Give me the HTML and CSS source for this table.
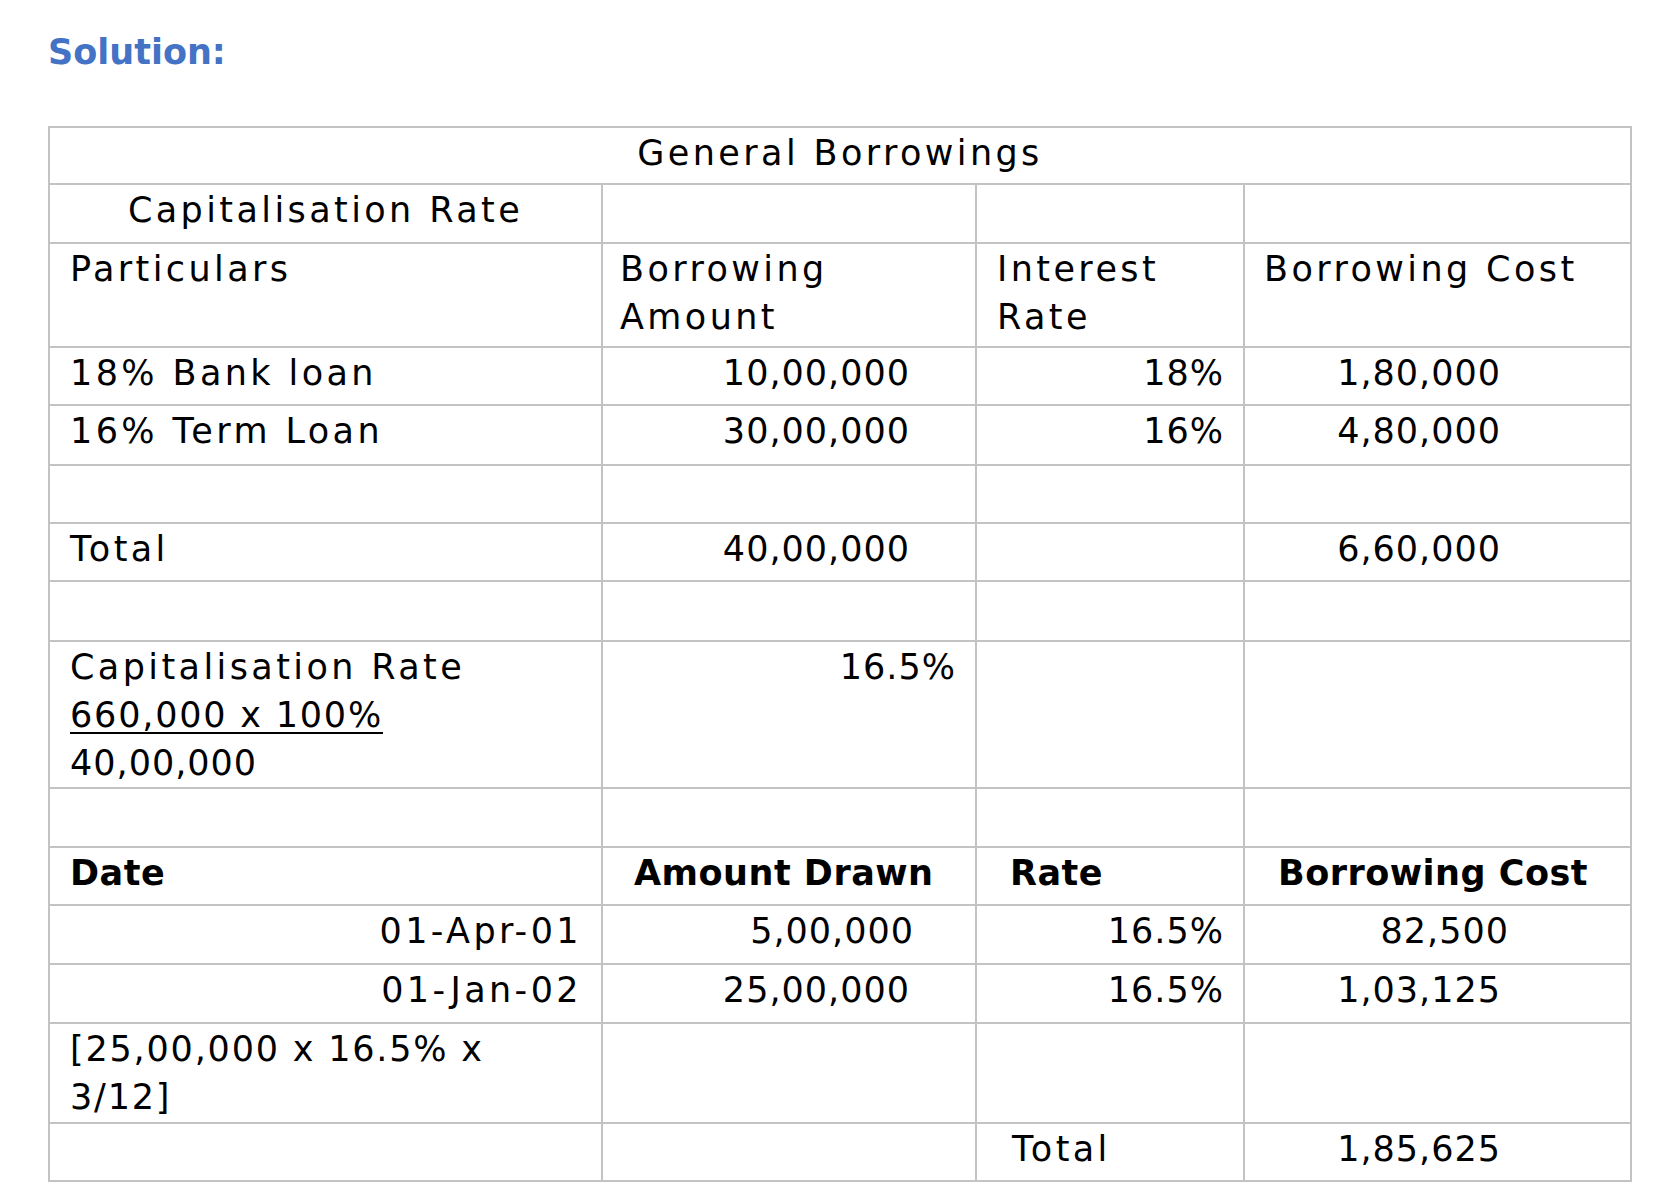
FILE: index.html
```html
<!DOCTYPE html>
<html lang="en">
<head>
<meta charset="utf-8">
<title>Solution - General Borrowings</title>
<link rel="stylesheet" href="styles.css">
</head>
<body>
<main class="page">
  <h2 class="solution">Solution:</h2>
  <table class="sheet">
    <colgroup>
      <col class="c1"><col class="c2"><col class="c3"><col class="c4">
    </colgroup>
    <tbody>
      <tr class="h57"><td colspan="4" class="t center">General Borrowings</td></tr>
      <tr class="h59"><td class="t center">Capitalisation Rate</td><td></td><td></td><td></td></tr>
      <tr class="r-2l">
        <td class="t pl-a">Particulars</td>
        <td class="t pl-b">Borrowing<br>Amount</td>
        <td class="t pl-c">Interest<br>Rate</td>
        <td class="t pl-d">Borrowing Cost</td>
      </tr>
      <tr>
        <td class="t pl-a">18% Bank loan</td>
        <td class="n right pr-amt">10,00,000</td>
        <td class="n right pr-rate">18%</td>
        <td class="n right pr-cost">1,80,000</td>
      </tr>
      <tr class="h60">
        <td class="t pl-a">16% Term Loan</td>
        <td class="n right pr-amt">30,00,000</td>
        <td class="n right pr-rate">16%</td>
        <td class="n right pr-cost">4,80,000</td>
      </tr>
      <tr><td></td><td></td><td></td><td></td></tr>
      <tr>
        <td class="t pl-a">Total</td>
        <td class="n right pr-amt">40,00,000</td>
        <td></td>
        <td class="n right pr-cost">6,60,000</td>
      </tr>
      <tr class="h60"><td></td><td></td><td></td><td></td></tr>
      <tr class="r-3l">
        <td class="t pl-a">Capitalisation Rate<br><span class="m uline">660,000 x 100%</span><br><span class="n">40,00,000</span></td>
        <td class="n right pr-rate">16.5%</td>
        <td></td>
        <td></td>
      </tr>
      <tr class="h59"><td></td><td></td><td></td><td></td></tr>
      <tr>
        <td class="b pl-date">Date</td>
        <td class="b pl-drawn">Amount Drawn</td>
        <td class="b pl-rate">Rate</td>
        <td class="b pl-bcost">Borrowing Cost</td>
      </tr>
      <tr class="h59">
        <td class="t right pr-date">01-Apr-01</td>
        <td class="n right pr-amt2">5,00,000</td>
        <td class="n right pr-rate">16.5%</td>
        <td class="n right pr-cost2">82,500</td>
      </tr>
      <tr class="h59">
        <td class="t right pr-date">01-Jan-02</td>
        <td class="n right pr-amt">25,00,000</td>
        <td class="n right pr-rate">16.5%</td>
        <td class="n right pr-cost">1,03,125</td>
      </tr>
      <tr class="r-br">
        <td class="m pl-a">[25,00,000 x 16.5% x<br>3/12]</td>
        <td></td><td></td><td></td>
      </tr>
      <tr>
        <td></td>
        <td></td>
        <td class="t pl-total">Total</td>
        <td class="n right pr-cost">1,85,625</td>
      </tr>
    </tbody>
  </table>
</main>
</body>
</html>
```
FILE: styles.css
```css
html, body {
  margin: 0;
  padding: 0;
  background: #ffffff;
}

.page {
  padding: 28px 0 0 48px;
  font-family: "DejaVu Sans", "Liberation Sans", sans-serif;
  color: #000000;
}

.solution {
  margin: 0 0 50px 0;
  font-size: 35px;
  line-height: 48px;
  font-weight: bold;
  color: #4472c4;
  letter-spacing: 0;
}

.sheet {
  border-collapse: collapse;
  table-layout: fixed;
  width: 1582px;
  font-size: 35px;
  line-height: 48px;
}

.c1 { width: 553px; }
.c2 { width: 374px; }
.c3 { width: 268px; }
.c4 { width: 387px; }

.sheet tr { height: 58px; }
.sheet tr.h57 { height: 57px; }
.sheet tr.h59 { height: 59px; }
.sheet tr.h60 { height: 60px; }
.sheet tr.r-2l { height: 104px; }
.sheet tr.r-3l { height: 147px; }
.sheet tr.r-br { height: 100px; }

.sheet td {
  border: 2px solid #c3c3c3;
  padding: 0.5px 0 0 0;
  vertical-align: top;
  white-space: nowrap;
  overflow: hidden;
}

.t { letter-spacing: 3.4px; }
.n { letter-spacing: 1px; }
.m { letter-spacing: 1.8px; }
.b { font-weight: bold; letter-spacing: 0.5px; }

.uline {
  text-decoration: underline;
  text-decoration-thickness: 2px;
  text-underline-offset: 5px;
}

.center { text-align: center; }
.right { text-align: right; }

.sheet td.pl-a { padding-left: 20px; }
.sheet td.pl-b { padding-left: 17px; }
.sheet td.pl-c { padding-left: 20px; }
.sheet td.pl-d { padding-left: 19px; }
.sheet td.pl-date { padding-left: 20px; }
.sheet td.pl-drawn { padding-left: 31px; }
.sheet td.pl-rate { padding-left: 33px; }
.sheet td.pl-bcost { padding-left: 33px; }
.sheet td.pl-total { padding-left: 35px; }

.sheet td.pr-rate { padding-right: 19px; }
.sheet td.pr-date { padding-right: 19px; }
.sheet td.pr-amt { padding-right: 65px; }
.sheet td.pr-amt2 { padding-right: 61px; }
.sheet td.pr-cost { padding-right: 129px; }
.sheet td.pr-cost2 { padding-right: 121px; }
```
